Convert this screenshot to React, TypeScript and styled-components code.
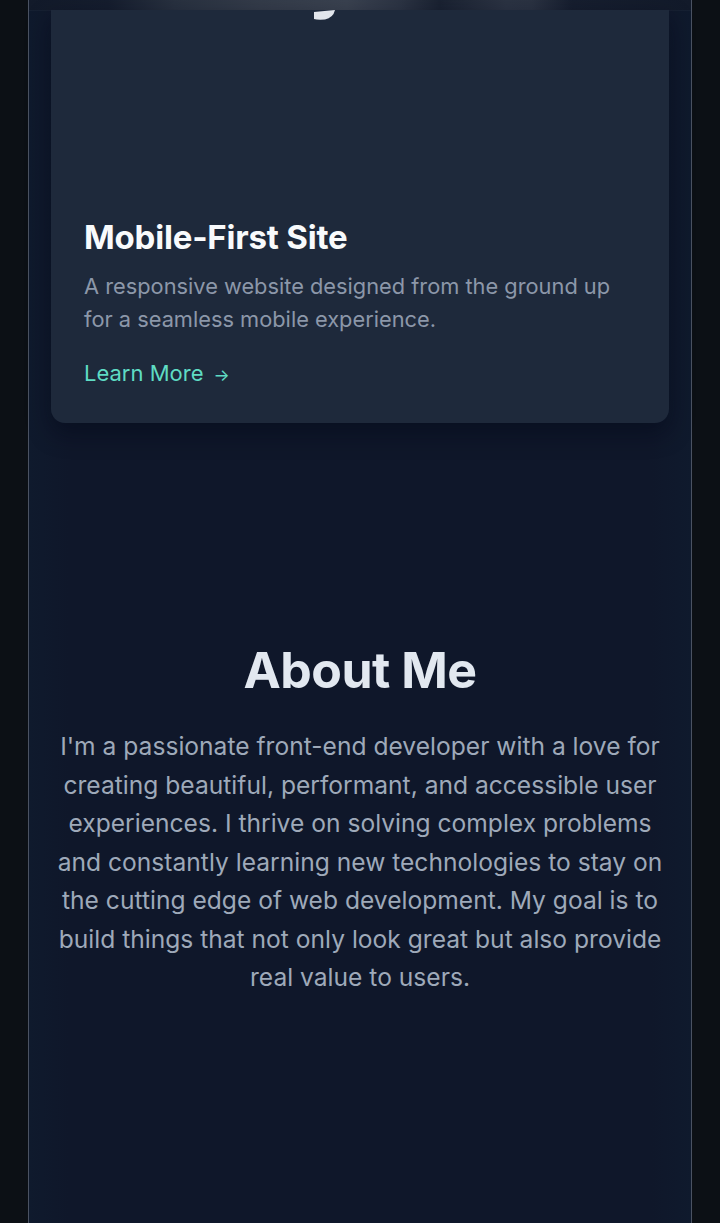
import React from "react";
import styled, { createGlobalStyle } from "styled-components";

const GlobalStyle = createGlobalStyle`
  html, body {
    margin: 0;
    padding: 0;
    background: #0c1015;
  }
  body {
    font-family: Inter, "Noto Sans", sans-serif;
    -webkit-font-smoothing: antialiased;
  }
  * { box-sizing: border-box; }
`;

const Frame = styled.div`
  margin: 0 28px;
  min-height: 1223px;
  border-left: 1px solid #4a5262;
  border-right: 1px solid #4a5262;
  background: linear-gradient(90deg, #0f1a2d 0%, #0f172a 6%, #0f172a 94%, #0f1a2d 100%);
  display: flex;
  flex-direction: column;
`;

const TopBar = styled.div`
  height: 10px;
  flex-shrink: 0;
  background: linear-gradient(
    90deg,
    #121a2a 0%,
    #151d2e 12%,
    #283140 22%,
    #343c4a 35%,
    #3a4250 48%,
    #2c3444 56%,
    #1a2232 62%,
    #2b3343 72%,
    #2a3242 76%,
    #161e2f 82%,
    #121a2a 100%
  );
  box-shadow: 0 1px 0 rgba(255, 255, 255, 0.03);
`;

const Card = styled.article`
  margin: 0 22px;
  background: #1e293b;
  border-radius: 0 0 14px 14px;
  box-shadow: 0 10px 24px rgba(2, 6, 23, 0.45);
  display: flex;
  flex-direction: column;
`;

const Media = styled.div`
  height: 207px;
  display: flex;
  justify-content: center;
`;

const MediaGlyph = styled.svg`
  margin-left: -70px;
  width: 24px;
  height: 12px;
`;

const CardBody = styled.div`
  padding: 0 33px 33px;
  display: flex;
  flex-direction: column;
  align-items: flex-start;
`;

const CardTitle = styled.h3`
  margin: 0;
  font-size: 33px;
  line-height: 40px;
  font-weight: 700;
  color: #f8fafc;
  letter-spacing: -0.2px;
`;

const CardText = styled.p`
  margin: 13px 0 0;
  font-size: 21.8px;
  line-height: 33px;
  color: #8c97a9;
`;

const LearnMore = styled.a`
  margin-top: 22px;
  font-size: 22px;
  line-height: 30px;
  color: #5fdcc4;
  text-decoration: none;
  display: inline-flex;
  align-items: baseline;
  gap: 10px;
`;

const Arrow = styled.span`
  font-size: 17px;
`;

const About = styled.section`
  padding: 217px 28px 0;
  display: flex;
  flex-direction: column;
  align-items: center;
  text-align: center;
`;

const AboutTitle = styled.h2`
  margin: 0;
  font-size: 50px;
  line-height: 60px;
  font-weight: 700;
  color: #e2e8f0;
  letter-spacing: -0.5px;
`;

const AboutText = styled.p`
  margin: 27px 0 0;
  font-size: 24.6px;
  line-height: 38.5px;
  color: #9ea9b9;
`;

export default function App() {
  return (
    <>
      <GlobalStyle />
      <Frame>
        <TopBar />
        <Card>
          <Media>
            <MediaGlyph viewBox="0 0 24 12">
              <path d="M1 2 L22 0 Q20 8 12 9.5 Q4 10 1 9 Z" fill="#e2e6ec" />
            </MediaGlyph>
          </Media>
          <CardBody>
            <CardTitle>Mobile-First Site</CardTitle>
            <CardText>
              A responsive website designed from the ground up for a seamless
              mobile experience.
            </CardText>
            <LearnMore href="#">
              Learn More <Arrow>→</Arrow>
            </LearnMore>
          </CardBody>
        </Card>
        <About>
          <AboutTitle>About Me</AboutTitle>
          <AboutText>
            I'm a passionate front-end developer with a love for creating
            beautiful, performant, and accessible user experiences. I thrive on
            solving complex problems and constantly learning new technologies to
            stay on the cutting edge of web development. My goal is to build
            things that not only look great but also provide real value to
            users.
          </AboutText>
        </About>
      </Frame>
    </>
  );
}
